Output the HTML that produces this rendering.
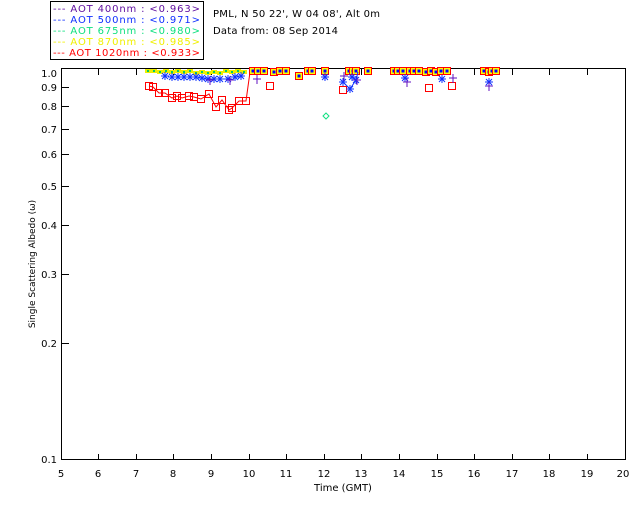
<!DOCTYPE html><html><head><style>
body{margin:0;background:#fff;width:640px;height:512px;overflow:hidden;font-family:"DejaVu Sans","Liberation Sans",sans-serif}
svg text{font-family:"DejaVu Sans","Liberation Sans",sans-serif;font-size:10px}
</style></head><body>
<svg width="640" height="512" xmlns="http://www.w3.org/2000/svg">
<defs>
<g id="sq"><rect x="-3.5" y="-3.5" width="7" height="7" fill="none" stroke="#f00" stroke-width="1"/></g>
<g id="cl"><rect x="-3" y="-3" width="6" height="6" fill="#ff0"/><rect x="-1.5" y="-1.5" width="3" height="3" fill="#00f"/><rect x="-3.5" y="-3.5" width="7" height="7" fill="none" stroke="#f00"/></g>
<g id="st" stroke="#13f" stroke-width="1"><path d="M-4 0H4M0-4V4M-3-3L3 3M-3 3L3-3"/></g>
<g id="pl" stroke="#6010c0"><path d="M-4 0H4M0-4V5"/></g>
<g id="ym"><rect x="-3" y="-2" width="6" height="4" fill="#ee0"/><rect x="-1" y="-1" width="2" height="2" fill="#0c6"/></g>
</defs>
<rect x="50.5" y="1.5" width="153" height="58" fill="none" stroke="#000"/>
<g>
<text x="53" y="12" fill="#6010a0" textLength="147" lengthAdjust="spacing">--- AOT  400nm : &lt;0.963&gt;</text>
<text x="53" y="23" fill="#1030ff" textLength="147" lengthAdjust="spacing">--- AOT  500nm : &lt;0.971&gt;</text>
<text x="53" y="34" fill="#10e080" textLength="147" lengthAdjust="spacing">--- AOT  675nm : &lt;0.980&gt;</text>
<text x="53" y="45" fill="#f0f000" textLength="147" lengthAdjust="spacing">--- AOT  870nm : &lt;0.985&gt;</text>
<text x="53" y="56" fill="#f00" textLength="147" lengthAdjust="spacing">--- AOT 1020nm : &lt;0.933&gt;</text>
</g>
<text x="213" y="17" fill="#000" textLength="167" lengthAdjust="spacing">PML, N 50 22', W 04 08', Alt 0m</text>
<text x="213" y="34" fill="#000" textLength="125" lengthAdjust="spacing">Data from: 08 Sep 2014</text>
<rect x="61.5" y="68.5" width="564" height="391" fill="none" stroke="#000"/>
<g stroke="#000">
<path d="M61 87.5h8M61 106.5h8M61 129.5h8M61 154.5h8M61 186.5h8M61 225.5h8M61 274.5h8M61 343.5h8"/>
<path d="M98.5 460v-6M136.5 460v-6M173.5 460v-6M211.5 460v-6M249.5 460v-6M286.5 460v-6M324.5 460v-6M361.5 460v-6M399.5 460v-6M437.5 460v-6M474.5 460v-6M512.5 460v-6M549.5 460v-6M587.5 460v-6"/>
<path d="M98.5 69v6M136.5 69v6M173.5 69v6M211.5 69v6M249.5 69v6M286.5 69v6M324.5 69v6M361.5 69v6M399.5 69v6M437.5 69v6M474.5 69v6M512.5 69v6M549.5 69v6M587.5 69v6"/>
</g>
<g fill="#000" text-anchor="end">
<text x="57" y="77">1.0</text><text x="57" y="91">0.9</text><text x="57" y="110">0.8</text><text x="57" y="133">0.7</text><text x="57" y="158">0.6</text><text x="57" y="190">0.5</text><text x="57" y="229">0.4</text><text x="57" y="278">0.3</text><text x="57" y="347">0.2</text><text x="57" y="463">0.1</text>
</g>
<g fill="#000" text-anchor="middle">
<text x="61" y="477">5</text><text x="98" y="477">6</text><text x="136" y="477">7</text><text x="173" y="477">8</text><text x="211" y="477">9</text><text x="249" y="477">10</text><text x="286" y="477">11</text><text x="324" y="477">12</text><text x="361" y="477">13</text><text x="399" y="477">14</text><text x="437" y="477">15</text><text x="474" y="477">16</text><text x="512" y="477">17</text><text x="549" y="477">18</text><text x="587" y="477">19</text><text x="623" y="477">20</text>
<text x="343" y="491">Time (GMT)</text>
</g>
<text transform="translate(35,264) rotate(-90)" text-anchor="middle" fill="#000" style="font-size:9px">Single Scattering Albedo (ω)</text>
<g>
<use href="#ym" x="148" y="71"/><use href="#ym" x="154" y="71"/><use href="#ym" x="160" y="72"/><use href="#ym" x="166" y="71"/><use href="#ym" x="172" y="72"/><use href="#ym" x="178" y="71"/><use href="#ym" x="184" y="72"/><use href="#ym" x="190" y="71"/><use href="#ym" x="196" y="73"/><use href="#ym" x="202" y="72"/><use href="#ym" x="208" y="73"/><use href="#ym" x="214" y="72"/><use href="#ym" x="220" y="73"/><use href="#ym" x="226" y="71"/><use href="#ym" x="232" y="72"/><use href="#ym" x="238" y="71"/><use href="#ym" x="244" y="72"/>
<use href="#st" x="165" y="76"/><use href="#st" x="172" y="77"/><use href="#st" x="178" y="77"/><use href="#st" x="184" y="77"/><use href="#st" x="190" y="77"/><use href="#st" x="196" y="77"/><use href="#st" x="202" y="78"/><use href="#st" x="208" y="79"/><use href="#st" x="214" y="79"/><use href="#st" x="220" y="79"/><use href="#st" x="228" y="79"/><use href="#st" x="235" y="77"/><use href="#st" x="241" y="76"/>
<use href="#pl" x="210" y="80"/><use href="#pl" x="230" y="80"/><use href="#pl" x="257" y="79"/>
</g>
<polyline fill="none" stroke="#f00" points="149,86 153,87 159,93 165,93 172,98 177,96 182,98 189,96 194,97 201,99 209,94 216,107 222,100 229,110 232,108 239,101 246,101 250,72"/>
<g>
<use href="#sq" x="149" y="86"/><use href="#sq" x="153" y="87"/><use href="#sq" x="159" y="93"/><use href="#sq" x="165" y="93"/><use href="#sq" x="172" y="98"/><use href="#sq" x="177" y="96"/><use href="#sq" x="182" y="98"/><use href="#sq" x="189" y="96"/><use href="#sq" x="194" y="97"/><use href="#sq" x="201" y="99"/><use href="#sq" x="209" y="94"/><use href="#sq" x="216" y="107"/><use href="#sq" x="222" y="100"/><use href="#sq" x="229" y="110"/><use href="#sq" x="232" y="108"/><use href="#sq" x="239" y="101"/><use href="#sq" x="246" y="101"/>
</g>
<g>
<use href="#cl" x="253" y="71"/><use href="#cl" x="258" y="71"/><use href="#cl" x="264" y="71"/><use href="#cl" x="274" y="72"/><use href="#cl" x="280" y="71"/><use href="#cl" x="286" y="71"/><use href="#cl" x="299" y="76"/><use href="#cl" x="308" y="71"/><use href="#cl" x="312" y="71"/><use href="#cl" x="325" y="71"/><use href="#cl" x="349" y="71"/><use href="#cl" x="353" y="71"/><use href="#cl" x="356" y="71"/><use href="#cl" x="368" y="71"/>
<use href="#cl" x="394" y="71"/><use href="#cl" x="398" y="71"/><use href="#cl" x="403" y="71"/><use href="#cl" x="410" y="71"/><use href="#cl" x="414" y="71"/><use href="#cl" x="419" y="71"/><use href="#cl" x="426" y="72"/><use href="#cl" x="431" y="71"/><use href="#cl" x="436" y="72"/><use href="#cl" x="441" y="71"/><use href="#cl" x="447" y="71"/><use href="#cl" x="484" y="71"/><use href="#cl" x="489" y="72"/><use href="#cl" x="492" y="71"/><use href="#cl" x="496" y="71"/>
<use href="#sq" x="270" y="86"/><use href="#sq" x="343" y="90"/><use href="#sq" x="429" y="88"/><use href="#sq" x="452" y="86"/>
<use href="#st" x="325" y="77"/><use href="#st" x="343" y="82"/><use href="#st" x="350" y="89"/><use href="#st" x="356" y="80"/><use href="#st" x="442" y="79"/><use href="#st" x="405" y="78"/><use href="#st" x="489" y="82"/><use href="#st" x="352" y="77"/>
<use href="#pl" x="357" y="80"/><use href="#pl" x="407" y="82"/><use href="#pl" x="453" y="78"/><use href="#pl" x="489" y="86"/><use href="#pl" x="344" y="76"/>
<polyline fill="none" stroke="#13f" points="343,82 350,89 356,80 358,72"/>
<path d="M326 113l3 3-3 3-3-3z" fill="none" stroke="#10e080"/>
</g>
</svg>
</body></html>
